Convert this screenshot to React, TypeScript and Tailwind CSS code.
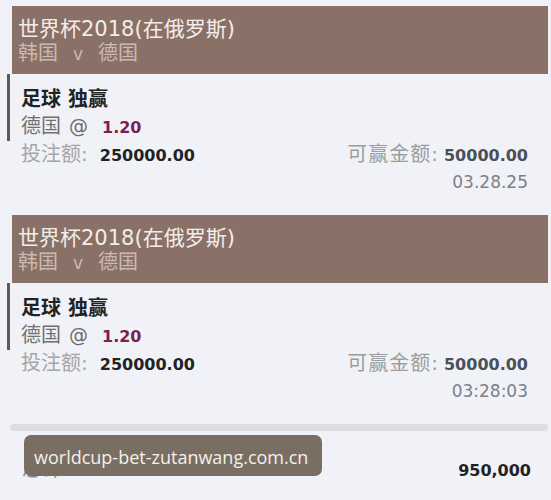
import React, { FC } from "react";

interface Bet {
  event: string;
  home: string;
  away: string;
  market: string;
  pick: string;
  odds: string;
  stake: string;
  payout: string;
  time: string;
}

const bets: Bet[] = [
  {
    event: "世界杯2018(在俄罗斯)",
    home: "韩国",
    away: "德国",
    market: "足球 独赢",
    pick: "德国",
    odds: "1.20",
    stake: "250000.00",
    payout: "50000.00",
    time: "03.28.25",
  },
  {
    event: "世界杯2018(在俄罗斯)",
    home: "韩国",
    away: "德国",
    market: "足球 独赢",
    pick: "德国",
    odds: "1.20",
    stake: "250000.00",
    payout: "50000.00",
    time: "03:28:03",
  },
];

const BetCard: FC<{ bet: Bet }> = ({ bet }) => (
  <div>
    <div className="ml-[12px] mr-[3px] h-[68px] bg-[#8a7168] pl-[6px] pt-[11px]">
      <div className="text-[21px] leading-[24px] text-[#f3ede9]">{bet.event}</div>
      <div className="text-[20px] leading-[24px] text-[#cbbab2]">
        {bet.home}
        <span className="mx-[15px] text-[17px]">v</span>
        {bet.away}
      </div>
    </div>

    <div className="ml-[7px] border-l-[3px] border-[#5a5a5a] pl-[11px] pt-[12px]">
      <div className="text-[20px] leading-[27px] font-bold text-[#222]">{bet.market}</div>
      <div className="flex items-baseline text-[20px] leading-[27px] text-[#707070]">
        <span>{bet.pick}</span>
        <span className="ml-[8px] text-[19px] text-[#6a6a6a]">@</span>
        <span className="ml-[14px] text-[16px] font-bold text-[#7a1f52]">{bet.odds}</span>
      </div>
    </div>

    <div className="flex items-baseline justify-between pl-[21px] pr-[23px] leading-[27px]">
      <div className="flex items-baseline">
        <span className="text-[20px] text-[#a5a5a5]">投注额:</span>
        <span className="ml-[12px] text-[16px] font-bold text-[#222]">{bet.stake}</span>
      </div>
      <div className="flex items-baseline">
        <span className="text-[20px] tracking-[1px] text-[#9c9c9c]">可赢金额:</span>
        <span className="ml-[5px] text-[16px] font-bold text-[#495058]">{bet.payout}</span>
      </div>
    </div>
    <div className="pr-[23px] text-right text-[17px] leading-[27px] text-[#7c8088]">{bet.time}</div>
  </div>
);

const App: FC = () => {
  return (
    <div className="relative h-[500px] w-[551px] overflow-hidden bg-[#f0f2f7] pt-[6px] font-['DejaVu_Sans','Noto_Sans_CJK_SC',sans-serif]">
      <div className="flex flex-col gap-[19px]">
        {bets.map((bet, i) => (
          <BetCard key={i} bet={bet} />
        ))}
      </div>

      <div className="mt-[19px] ml-[10px] mr-[3px] h-[7px] rounded-full bg-[#dcdee4]" />

      <div className="mt-[25px] flex items-baseline justify-between pl-[22px] pr-[20px] leading-[27px]">
        <span className="text-[20px] text-[#8a8a8a]">总计:</span>
        <span className="text-[16px] font-bold text-[#222]">950,000</span>
      </div>

      {/* site watermark */}
      <div className="absolute left-[24px] top-[435px] flex h-[41px] w-[298px] items-center whitespace-nowrap rounded-[7px] bg-[#7a6e63] pl-[10px] pt-[4px] font-['Open_Sans',sans-serif] text-[18px] text-[#f4f0ea]">
        worldcup-bet-zutanwang.com.cn
      </div>
    </div>
  );
};

export default App;
